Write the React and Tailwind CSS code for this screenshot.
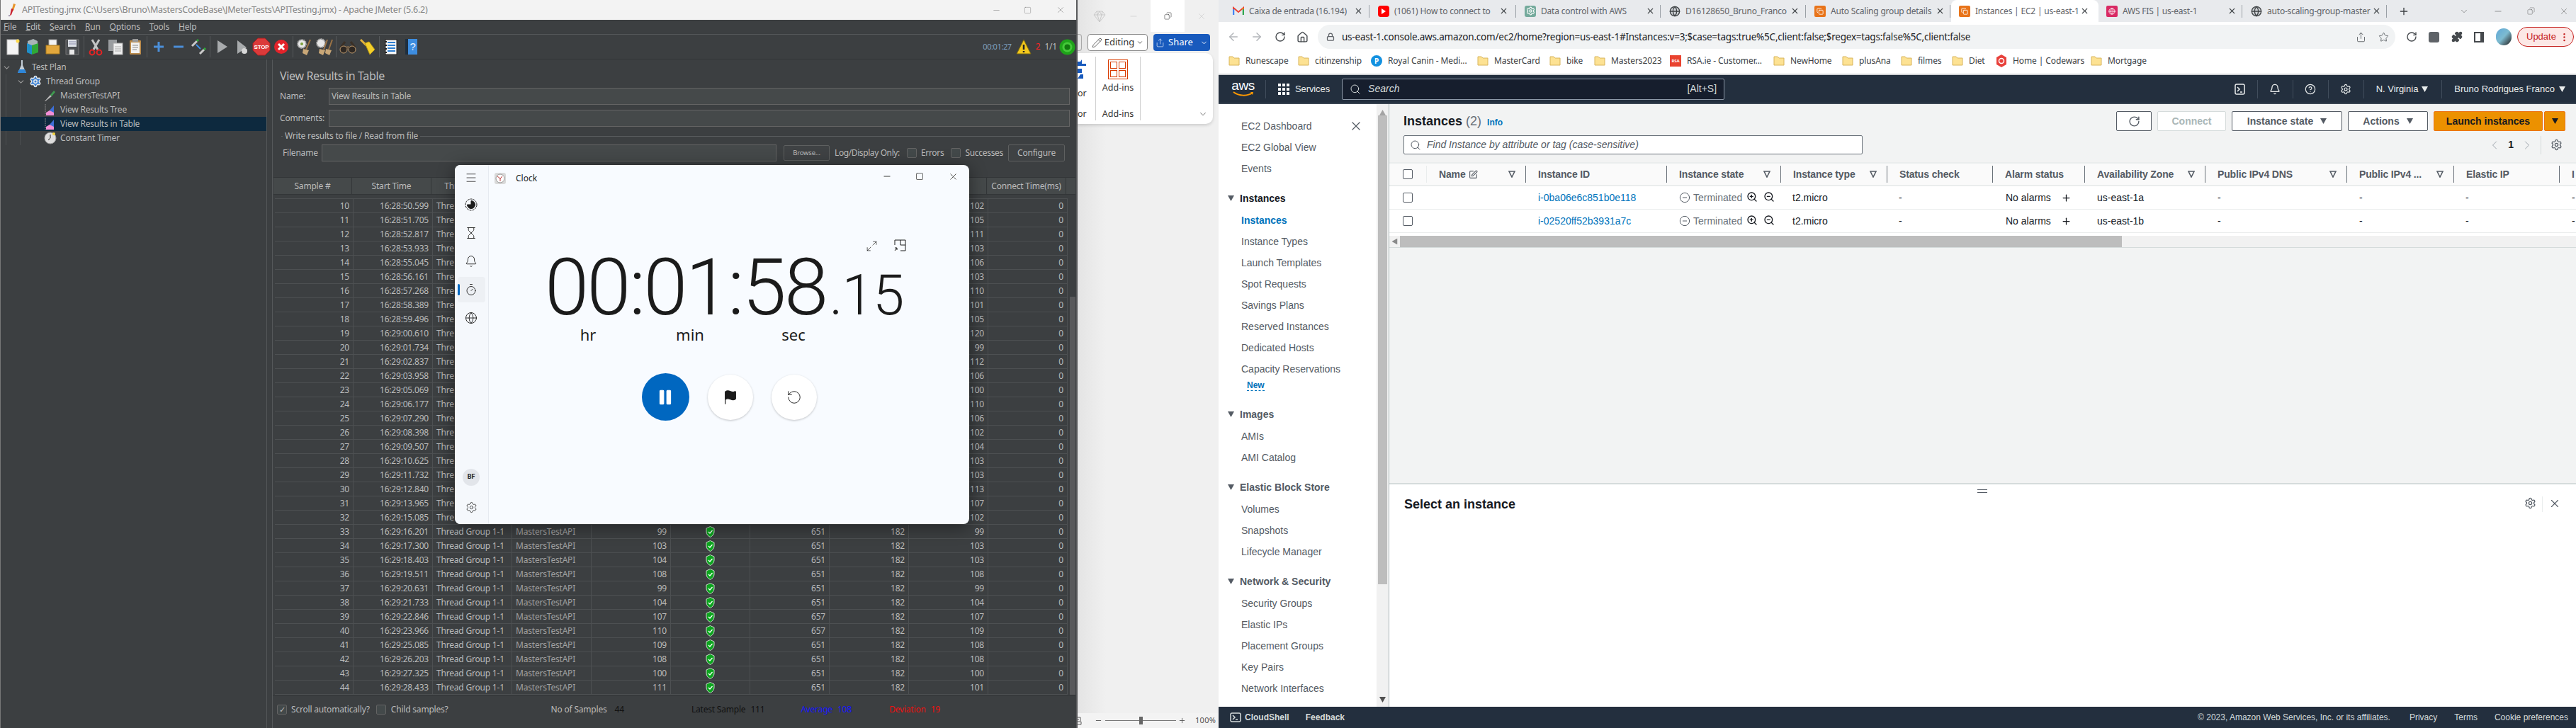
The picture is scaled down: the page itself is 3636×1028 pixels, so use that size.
import {
  ArrowLeft, ArrowRight, Bell, ChevronDown, ChevronLeft, ChevronRight, CircleHelp, CircleMinus, Flag, Globe, Hourglass,
  Lock, Maximize2, Menu, Minus, Pause, Pencil, Plus, RotateCcw, RotateCw, Search, Settings, Share, Square, Star,
  Timer, X, ZoomIn, ZoomOut, Puzzle, Home, EllipsisVertical, Copy, SquarePen,
} from 'lucide-react'

// JMeter data
const times = [
  '16:28:50.599', '16:28:51.705', '16:28:52.817', '16:28:53.933', '16:28:55.045', '16:28:56.161', '16:28:57.268',
  '16:28:58.389', '16:28:59.496', '16:29:00.610', '16:29:01.734', '16:29:02.837', '16:29:03.958', '16:29:05.069',
  '16:29:06.177', '16:29:07.290', '16:29:08.398', '16:29:09.507', '16:29:10.625', '16:29:11.732', '16:29:12.840',
  '16:29:13.965', '16:29:15.085', '16:29:16.201', '16:29:17.300', '16:29:18.403', '16:29:19.511', '16:29:20.631',
  '16:29:21.733', '16:29:22.846', '16:29:23.966', '16:29:25.085', '16:29:26.203', '16:29:27.325', '16:29:28.433',
]
const latency = [102, 105, 111, 103, 106, 103, 110, 101, 105, 120, 99, 112, 106, 100, 110, 106, 102, 104, 103, 103, 113, 107, 102, 99, 103, 103, 108, 99, 104, 107, 109, 108, 108, 100, 101]
const sampleTime = { 33: 99, 34: 103, 35: 104, 36: 108, 37: 99, 38: 104, 39: 107, 40: 110, 41: 109, 42: 108, 43: 100, 44: 111 }
// the Clock window covers the middle columns of these rows and headers
const headers = ['Sample #', 'Start Time', 'Thread Name', '', '', '', '', '', '', 'Connect Time(ms)']

function JIcon({ name }) {
  const svg = (c) => <svg width="26" height="26" viewBox="0 0 26 26">{c}</svg>
  switch (name) {
    case 'new': return svg(<><rect x="5" y="3" width="16" height="21" fill="#f4f4f4" stroke="#bbb" /><circle cx="20" cy="5" r="2.5" fill="#ffd84a" /></>)
    case 'tpl': return svg(<><path d="M6 5l8-3 6 3v7H6z" fill="#a9b4b8" /><path d="M5 8l7 3v13l-7-3z" fill="#1f8fc9" /><path d="M12 11l9-3v13l-9 3z" fill="#2fa838" /></>)
    case 'open': return svg(<><rect x="8" y="3" width="11" height="12" fill="#f3f3f3" stroke="#999" /><path d="M4 11h19v12H4z" fill="#e2a73c" stroke="#a97a1f" /></>)
    case 'save': return svg(<><path d="M4 3h18v21H4z" fill="#4c4f52" stroke="#777" /><rect x="7" y="3" width="12" height="10" fill="#dfe3e8" /><rect x="9" y="17" width="7" height="7" fill="#e9e9e9" /><path d="M8 6h10M8 9h10" stroke="#88a" /></>)
    case 'cut': return svg(<><path d="M8 3l8 14M18 3l-8 14" stroke="#c4c4c4" strokeWidth="3" /><circle cx="8" cy="21" r="3.4" fill="none" stroke="#e32424" strokeWidth="2" /><circle cx="18" cy="21" r="3.4" fill="none" stroke="#e32424" strokeWidth="2" /></>)
    case 'copy': return svg(<><rect x="3" y="3" width="12" height="16" fill="#9a9da0" /><rect x="10" y="8" width="13" height="16" fill="#eee" stroke="#aaa" /><path d="M12 13h9M12 16h9M12 19h9" stroke="#aaa" /></>)
    case 'paste': return svg(<><rect x="5" y="4" width="16" height="20" fill="#b98a4c" rx="1" /><rect x="7" y="7" width="12" height="15" fill="#f2f2f2" /><rect x="9" y="2" width="8" height="4" fill="#999" /><path d="M9 11h8M9 14h8M9 17h6" stroke="#888" /></>)
    case 'plus': return svg(<path d="M13 6v14M6 13h14" stroke="#4b8fd9" strokeWidth="3" />)
    case 'minus': return svg(<path d="M6 13h14" stroke="#4b8fd9" strokeWidth="3" />)
    case 'toggle': return svg(<><path d="M4 12l7-7" stroke="#c9c9c9" strokeWidth="3" /><path d="M11 5l2-2" stroke="#2fa838" strokeWidth="3" /><path d="M15 23l6-6" stroke="#c9c9c9" strokeWidth="3" /><path d="M21 17l2-2" stroke="#2fa838" strokeWidth="3" /><path d="M10 10l6 6" stroke="#3d8fe8" strokeWidth="2" /></>)
    case 'start': return svg(<path d="M7 4l14 9-14 9z" fill="#a8abad" />)
    case 'startx': return svg(<><path d="M7 4l13 10-13 9z" fill="#a8abad" /><circle cx="17" cy="19" r="4" fill="#d7d7d7" /></>)
    case 'stop': return svg(<><path d="M8 1h10l7 7v10l-7 7H8l-7-7V8z" fill="#db3a3a" stroke="#a82020" /><text x="13" y="16" textAnchor="middle" fontSize="8" fontWeight="700" fill="#fff" fontFamily="Liberation Sans">STOP</text></>)
    case 'shut': return svg(<><circle cx="13" cy="13" r="10" fill="#e2232a" /><path d="M9 9l8 8M17 9l-8 8" stroke="#fff" strokeWidth="3" /></>)
    case 'clear': return svg(<><circle cx="9" cy="9" r="6" fill="#e8e8e8" stroke="#999" strokeDasharray="2 1" strokeWidth="2" /><circle cx="9" cy="9" r="2" fill="#7aa03c" /><path d="M21 3l-6 14" stroke="#9a7346" strokeWidth="2" /><path d="M11 16l8 2-3 7-6-3z" fill="#c9a777" /></>)
    case 'clearall': return svg(<><circle cx="8" cy="8" r="6" fill="#e8e8e8" stroke="#999" strokeDasharray="2 1" strokeWidth="2" /><path d="M17 3l-5 14M24 3l-5 14" stroke="#9a7346" strokeWidth="2" /><path d="M6 16l8 2-3 7-6-3zM15 16l8 2-3 7-6-3z" fill="#c9a777" /></>)
    case 'find': return svg(<><path d="M9 6l-6 8M17 6l6 8" stroke="#3a3027" strokeWidth="3" /><circle cx="7" cy="17" r="5" fill="#2e2823" stroke="#c09a6d" /><circle cx="19" cy="17" r="5" fill="#2e2823" stroke="#c09a6d" /><rect x="11" y="12" width="4" height="4" fill="#6d5a44" /></>)
    case 'broom': return svg(<><path d="M3 3l8 8" stroke="#e4b43c" strokeWidth="3" /><path d="M9 8l6-2 8 11-7 7z" fill="#f3cf2b" stroke="#b89813" /></>)
    case 'func': return svg(<><rect x="5" y="3" width="16" height="21" fill="#f6f6f6" stroke="#222" /><path d="M8 7h11M8 11h11M8 15h11M8 19h11" stroke="#2f7fd1" strokeWidth="2" /><path d="M4 6h3M4 11h3M4 16h3M4 21h3" stroke="#222" strokeWidth="2" /></>)
    case 'help': return svg(<><rect x="5" y="2" width="5" height="22" fill="#1f2f3f" /><rect x="9" y="2" width="13" height="22" fill="#3d8de0" /><text x="15.5" y="18" textAnchor="middle" fontSize="15" fill="#e8f2ff" fontFamily="Liberation Sans">?</text></>)
    default: return null
  }
}

function Sep() {
  return <div className="w-[5px] h-[30px] flex justify-center"><div className="w-px h-full bg-[#55585a]" /></div>
}

function Tool({ name }) {
  return <div className="w-[28px] h-[34px] flex items-center justify-center"><JIcon name={name} /></div>
}

function Shield() {
  return (
    <svg width="13" height="16" viewBox="0 0 13 16">
      <path d="M6.5 0.5L12 3v5c0 3.5-2.5 6-5.5 7.5C3.5 14 1 11.5 1 8V3z" fill="#0ca51e" stroke="#c9d8c9" />
      <path d="M4 8l2 2 3.5-4" fill="none" stroke="#fff" strokeWidth="1.3" />
    </svg>
  )
}

function TreeGraph() {
  return (
    <svg width="16" height="18" viewBox="0 0 16 18">
      <path d="M1 1v16" stroke="#888" strokeDasharray="2 1" />
      <path d="M3 16l4-6 6-7v13z" fill="#3d6fd9" />
      <path d="M2 17v-4l5-3 6 3v4z" fill="#f28ed6" />
    </svg>
  )
}

function Num({ children }) {
  return <div className="border-r border-[#4d5052] text-right pr-[5px] leading-[19px]">{children}</div>
}

function ResultRow({ n, i }) {
  const covered = n < 33
  return (
    <div className="h-[20px] grid grid-cols-[111px_repeat(9,112px)] border-b border-[#4d5052]">
      <Num>{n}</Num>
      <Num>{times[i]}</Num>
      <div className="border-r border-[#4d5052] pl-[5px] leading-[19px] whitespace-nowrap overflow-hidden">{covered ? 'Thre' : 'Thread Group 1-1'}</div>
      <div className="border-r border-[#4d5052] pl-[5px] leading-[19px] text-[#a0a0a0]">{covered ? '' : 'MastersTestAPI'}</div>
      <Num>{covered ? '' : sampleTime[n]}</Num>
      <div className="border-r border-[#4d5052] flex items-center justify-center">{!covered && <Shield />}</div>
      <Num>{covered ? '' : n === 39 || n === 40 ? 657 : 651}</Num>
      <Num>{covered ? '' : 182}</Num>
      <Num>{latency[i]}</Num>
      <Num>0</Num>
    </div>
  )
}

function JMeter() {
  return (
    <div className="w-[1521px] shrink-0 h-full flex flex-col bg-[#3c3f41] border-l border-[#777] border-r-2 border-r-[#58595b] text-[#bbbbbb] font-['Noto_Sans',sans-serif] text-[12px] tracking-[-0.2px]">
      <div className="h-[28px] bg-[#f3f3f3] flex items-center text-[#858585] text-[12.5px]">
        <svg className="ml-[9px]" width="14" height="20" viewBox="0 0 14 20"><path d="M9 1l3 1-3 9-3 1z" fill="#e8942a" /><path d="M6 8l3 1-3 8-2 1z" fill="#c8202f" /><path d="M3 17l1 2-2 0z" fill="#43285f" /></svg>
        <span className="ml-[7px] tracking-[-0.25px]">APITesting.jmx (C:\Users\Bruno\MastersCodeBase\JMeterTests\APITesting.jmx) - Apache JMeter (5.6.2)</span>
        <div className="ml-auto flex items-center">
          <Minus size={13} strokeWidth={1} className="mr-[32px] text-[#777]" />
          <Square size={11} strokeWidth={1} className="mr-[34px] text-[#777]" />
          <X size={14} strokeWidth={1} className="mr-[15px] text-[#777]" />
        </div>
      </div>
      <div className="h-[21px] flex items-center border-b border-[#55585a] pl-[4px] gap-[13px]">
        {['File', 'Edit', 'Search', 'Run', 'Options', 'Tools', 'Help'].map((m) => (
          <span key={m}><span className="underline">{m[0]}</span>{m.slice(1)}</span>
        ))}
      </div>
      <div className="h-[35px] flex items-center pl-[3px] border-b border-[#333638]">
        <Tool name="new" /><Tool name="tpl" /><Tool name="open" /><Tool name="save" /><Sep />
        <Tool name="cut" /><Tool name="copy" /><Tool name="paste" /><Sep />
        <Tool name="plus" /><Tool name="minus" /><Tool name="toggle" /><Sep />
        <Tool name="start" /><Tool name="startx" /><Tool name="stop" /><Tool name="shut" /><Sep />
        <Tool name="clear" /><Tool name="clearall" /><Sep />
        <Tool name="find" /><Tool name="broom" /><Sep />
        <Tool name="func" /><Tool name="help" />
        <div className="ml-auto flex items-center mr-[1px]">
          <span className="text-[#7f9fbf] text-[11px] tracking-[-0.4px]">00:01:27</span>
          <svg className="ml-[5px]" width="24" height="24" viewBox="0 0 24 24"><path d="M12 2l10 20H2z" fill="#f4c81c" stroke="#7b6a10" /><path d="M12 9v7M12 18v2" stroke="#222" strokeWidth="2.5" /></svg>
          <span className="ml-[5px] text-[#ff2424] text-[12px]">2</span>
          <span className="ml-[6px] text-[12px]">1/1</span>
          <svg className="ml-[3px]" width="23" height="23" viewBox="0 0 23 23"><circle cx="11.5" cy="11.5" r="11" fill="#1fa31a" /><circle cx="11.5" cy="11.5" r="7" fill="#45c93a" /><circle cx="11.5" cy="11.5" r="4" fill="#12780f" /></svg>
        </div>
      </div>
      <div className="flex-1 flex min-h-0">
        {/* tree */}
        <div className="w-[376px] shrink-0 relative pt-[1px] border-r border-[#55585a]">
          <div className="absolute left-[7px] top-[21px] h-[100px] w-px bg-[#4b4e50]" />
          <div className="absolute left-[27px] top-[41px] h-[80px] w-px bg-[#4b4e50]" />
          <div className="h-[20px] flex items-center">
            <ChevronDown size={13} className="ml-[2px] text-[#9a9a9a]" />
            <svg className="ml-[7px]" width="16" height="20" viewBox="0 0 16 20"><path d="M7 0h2v7l5 11H2L7 7z" fill="#c5cfd8" /><path d="M4 13h8l2 5H2z" fill="#2d86d9" /></svg>
            <span className="ml-[6px]">Test Plan</span>
          </div>
          <div className="h-[20px] flex items-center">
            <ChevronDown size={13} className="ml-[22px] text-[#9a9a9a]" />
            <Settings size={18} className="ml-[5px] text-[#e4e7ea]" fill="#3d83d6" />
            <span className="ml-[6px]">Thread Group</span>
          </div>
          <div className="h-[20px] flex items-center pl-[61px]">
            <svg width="18" height="18" viewBox="0 0 18 18"><path d="M1 17l8-9 2 2-9 7z" fill="#bbb" /><path d="M9 8l5-6 2 2-5 6z" fill="#3f9a50" /></svg>
            <span className="ml-[5px]">MastersTestAPI</span>
          </div>
          <div className="h-[20px] flex items-center pl-[62px]"><TreeGraph /><span className="ml-[6px]">View Results Tree</span></div>
          <div className="h-[20px] flex items-center pl-[62px] bg-[#0d293e] relative"><TreeGraph /><span className="ml-[6px]">View Results in Table</span></div>
          <div className="h-[20px] flex items-center pl-[61px]">
            <svg width="18" height="18" viewBox="0 0 18 18"><circle cx="9" cy="9" r="8" fill="#ddd" stroke="#999" /><path d="M9 4v5l-3 3" stroke="#222" fill="none" /><circle cx="14" cy="3" r="2" fill="#f2d33a" /></svg>
            <span className="ml-[5px]">Constant Timer</span>
          </div>
        </div>
        <div className="w-[7px] shrink-0" />
        {/* results panel */}
        <div className="w-[1134px] shrink-0 flex flex-col border-l border-[#55585a]">
          <div className="h-[40px] pl-[10px] pt-[11px] text-[16px] leading-[24px] tracking-[-0.35px]">View Results in Table</div>
          <div className="h-[24px] flex items-center pl-[10px]">
            <span className="w-[69px]">Name:</span>
            <div className="w-[1046px] h-full border border-[#646464] bg-[#45494a] flex items-center pl-[3px]">View Results in Table</div>
          </div>
          <div className="h-[24px] flex items-center pl-[10px] mt-[7px]">
            <span className="w-[69px]">Comments:</span>
            <div className="w-[1046px] h-full border border-[#646464] bg-[#45494a]" />
          </div>
          <div className="relative h-[25px] flex items-center ml-[12px]">
            <div className="absolute left-0 right-[8px] top-[13px] h-px bg-[#5a5d5f]" />
            <span className="relative bg-[#3c3f41] ml-[2px] px-[3px]">Write results to file / Read from file</span>
          </div>
          <div className="h-[24px] flex items-center pl-[14px]">
            <span className="w-[55px]">Filename</span>
            <div className="w-[642px] h-full border border-[#646464] bg-[#45494a]" />
            <div className="ml-[10px] w-[65px] h-[22px] border border-[#5e6060] rounded-[2px] bg-[#3f4244] flex items-center justify-center text-[9.5px]">Browse...</div>
            <span className="ml-[7px] tracking-[-0.4px]">Log/Display Only:</span>
            <div className="ml-[10px] w-[14px] h-[14px] border border-[#646464] rounded-[2px] bg-[#43494a]" />
            <span className="ml-[6px] tracking-[-0.3px]">Errors</span>
            <div className="ml-[10px] w-[14px] h-[14px] border border-[#646464] rounded-[2px] bg-[#43494a]" />
            <span className="ml-[6px] tracking-[-0.3px]">Successes</span>
            <div className="ml-[7px] w-[80px] h-[24px] border border-[#5e6060] rounded-[2px] bg-[#3f4244] flex items-center justify-center">Configure</div>
          </div>
          {/* table */}
          <div className="mt-[22px] ml-[1px] h-[25px] grid grid-cols-[111px_repeat(9,112px)] bg-[#45494a] border-y border-[#333638]">
            {headers.map((h, i) => <div key={i} className="border-r border-[#333638] flex items-center justify-center whitespace-nowrap overflow-hidden">{h}</div>)}
          </div>
          <div className="flex mt-[5px] ml-[3px]">
            <div className="w-[1119px] border-t border-[#4d5052]">
              {times.map((t, i) => <ResultRow key={t} n={i + 10} i={i} />)}
            </div>
            <div className="ml-[3px] w-[8px] mt-[139px] h-[562px] bg-[#58595b]" />
          </div>
          <div className="h-px mt-[1px] bg-[#333638]" />
          <div className="flex-1 flex items-center pb-[8px] pl-[6px]">
            <div className="w-[14px] h-[14px] border border-[#646464] rounded-[2px] bg-[#43494a] flex items-center justify-center text-[11px] leading-none">✓</div>
            <span className="ml-[6px]">Scroll automatically?</span>
            <div className="ml-[9px] w-[14px] h-[14px] border border-[#646464] rounded-[2px] bg-[#43494a]" />
            <span className="ml-[7px]">Child samples?</span>
            <span className="ml-[145px]">No of Samples</span><span className="ml-[11px] text-[#111]">44</span>
            <span className="ml-[95px] text-[#111]">Latest Sample</span><span className="ml-[7px] text-[#111]">111</span>
            <span className="ml-[51px] text-[#1414ff]">Average</span><span className="ml-[7px] text-[#1414ff]">108</span>
            <span className="ml-[53px] text-[#f01010]">Deviation</span><span className="ml-[7px] text-[#f01010]">19</span>
          </div>
        </div>
      </div>
    </div>
  )
}

function Word() {
  return (
    <div className="w-[199px] shrink-0 h-full flex flex-col bg-linear-to-r from-[#e4e4e4] to-[#f0f0f0] to-[20%] font-['Noto_Sans',sans-serif] text-[12px] text-[#333]">
      <div className="h-[45px] flex justify-end">
        <div className="w-[48px] flex items-center justify-center text-[#c9c9c9]">
          <svg width="18" height="18" viewBox="0 0 18 18" fill="none" stroke="currentColor"><path d="M5 2h8l4 5-8 10L1 7zM1 7h16M6 7l3 10 3-10M5 2l1 5 3-5 3 5 1-5" /></svg>
        </div>
        <div className="w-[48px] flex items-center justify-center text-[#c4c4c4]"><Minus size={14} strokeWidth={1} /></div>
        <div className="w-[48px] bg-white flex items-center justify-center"><Copy size={11} strokeWidth={1.2} className="-scale-x-100" /></div>
        <div className="w-[48px] flex items-center justify-center text-[#c4c4c4]"><X size={14} strokeWidth={1} /></div>
      </div>
      <div className="h-[24px] mt-[3px] flex pr-[12px]">
        <div className="w-[6px] h-full border border-l-0 border-[#aaa] rounded-r" />
        <div className="ml-[8px] w-[85px] h-full border border-[#8a8a8a] rounded-[4px] bg-white flex items-center justify-center gap-[3px] text-[13px]">
          <Pencil size={15} strokeWidth={1.2} /> Editing <ChevronDown size={10} />
        </div>
        <div className="ml-[8px] w-[80px] h-full rounded-[4px] bg-[#185abd] text-white flex items-center justify-center gap-[5px] text-[13px]">
          <Share size={13} strokeWidth={1.2} /> Share <ChevronDown size={11} className="ml-[5px]" />
        </div>
      </div>
      <div className="mt-[3px] mr-[8px] h-[100px] bg-white rounded-r-[10px] shadow-[0_2px_4px_rgba(0,0,0,0.15)] flex py-[5px] relative">
        <div className="w-[26px] border-r border-[#d0d0d0] flex flex-col text-[12.5px]">
          <svg width="12" height="30" viewBox="0 0 12 30" className="mt-[3px]"><path d="M0 4h4l2-3v6H12V10H0zM0 14h6v6H0zM4 22h4v6H0z" fill="#185abd" /></svg>
          <span className="h-[20px] mt-[4px] pt-[6px]">or</span>
          <span className="mt-auto leading-[18px]">or</span>
        </div>
        <div className="w-[63px] border-r border-[#d0d0d0] flex flex-col items-center text-[12.5px]">
          <svg width="28" height="28" viewBox="0 0 28 28" className="mt-[4px]" fill="none" stroke="#d83b01"><rect x="0.5" y="0.5" width="27" height="27" /><rect x="3.5" y="3.5" width="9" height="9" /><rect x="15.5" y="3.5" width="9" height="9" /><rect x="3.5" y="15.5" width="9" height="9" /><rect x="15.5" y="15.5" width="9" height="9" /></svg>
          <span className="mt-[3px] leading-[18px]">Add-ins</span>
          <span className="mt-auto leading-[18px]">Add-ins</span>
        </div>
        <ChevronDown size={14} strokeWidth={1.2} className="absolute right-[7px] bottom-[7px]" />
      </div>
      <div className="mt-auto h-[21px] flex items-center bg-[#f3f3f3] text-[11px]">
        <svg width="6" height="12" viewBox="0 0 6 12" fill="none" stroke="#555"><path d="M0 1h4v5M0 4h2M0 7h5v4H0" /></svg>
        <Minus size={11} className="ml-[18px] text-[#555]" />
        <div className="ml-[4px] w-[100px] h-px bg-[#777] relative flex justify-center items-center">
          <div className="w-[5px] h-[11px] bg-[#666]" />
        </div>
        <Plus size={11} className="ml-[3px] text-[#555]" />
        <span className="ml-[13px] text-[#555] tracking-[0.3px]">100%</span>
      </div>
    </div>
  )
}

function TabIcon({ kind }) {
  if (kind === 'gmail') return <svg width="16" height="13" viewBox="0 0 16 13"><path d="M1 12V2l7 6 7-6v10" fill="none" stroke="#ea4335" strokeWidth="2" /><path d="M1 12V4" stroke="#4285f4" strokeWidth="2.5" /><path d="M15 12V4" stroke="#34a853" strokeWidth="2.5" /><path d="M13 3l2-1v3z" fill="#fbbc04" /></svg>
  if (kind === 'yt') return <div className="w-[16px] h-[16px] rounded-[4px] bg-[#f00] flex items-center justify-center"><div className="w-0 h-0 border-y-[4px] border-y-transparent border-l-[6px] border-l-white" /></div>
  if (kind === 'gpt') return <div className="w-[16px] h-[16px] rounded-[3px] bg-[#74aa9c] flex items-center justify-center"><Settings size={13} className="text-white" /></div>
  if (kind === 'globe') return <Globe size={16} className="text-[#3c4043]" fill="#cfd2d6" />
  if (kind === 'aws') return <div className="w-[16px] h-[16px] rounded-[2px] bg-[#e8741a] flex items-center justify-center"><Copy size={10} className="text-white" /></div>
  return <div className="w-[16px] h-[16px] rounded-[2px] bg-[#d92a64] flex items-center justify-center"><Globe size={10} className="text-white" /></div>
}

const tabs = [
  { w: 'w-[205px]', kind: 'gmail', t: 'Caixa de entrada (16.194)' },
  { w: 'w-[207px]', kind: 'yt', t: '(1061) How to connect to' },
  { w: 'w-[204px]', kind: 'gpt', t: 'Data control with AWS' },
  { w: 'w-[205px]', kind: 'globe', t: 'D16128650_Bruno_Franco' },
  { w: 'w-[204px]', kind: 'aws', t: 'Auto Scaling group details' },
  { w: 'w-[208px]', kind: 'aws', t: 'Instances | EC2 | us-east-1', active: true },
  { w: 'w-[204px]', kind: 'fis', t: 'AWS FIS | us-east-1' },
  { w: 'w-[204px]', kind: 'globe', t: 'auto-scaling-group-master' },
]

function Folder() {
  return <svg width="16" height="16" viewBox="0 0 16 16" className="shrink-0"><path d="M1 2h5l2 2h7v10H1z" fill="#fde293" stroke="#d8b45a" /></svg>
}

const bookmarks = [
  { w: 'w-[98px]', t: 'Runescape' },
  { w: 'w-[103px]', t: 'citinzenship' },
  { w: 'w-[150px]', t: 'Royal Canin - Medi...', icon: <div className="w-[16px] h-[16px] rounded-full bg-[#1391e0] text-white text-[10px] font-bold flex items-center justify-center shrink-0">P</div> },
  { w: 'w-[102px]', t: 'MasterCard' },
  { w: 'w-[63px]', t: 'bike' },
  { w: 'w-[107px]', t: 'Masters2023' },
  { w: 'w-[146px]', t: 'RSA.ie - Customer...', icon: <div className="w-[16px] h-[16px] bg-[#e9432f] text-white text-[6px] font-bold flex items-center justify-center shrink-0">RSA</div> },
  { w: 'w-[97px]', t: 'NewHome' },
  { w: 'w-[83px]', t: 'plusAna' },
  { w: 'w-[72px]', t: 'filmes' },
  { w: 'w-[62px]', t: 'Diet' },
  { w: 'w-[134px]', t: 'Home | Codewars', icon: <svg width="16" height="18" viewBox="0 0 16 18" className="shrink-0"><path d="M8 0l7 4v10l-7 4-7-4V4z" fill="#e8413b" /><circle cx="8" cy="9" r="3.5" fill="none" stroke="#fff" strokeWidth="1.5" /></svg> },
  { w: 'w-[90px]', t: 'Mortgage' },
]

function Caret({ className }) {
  return <svg width="9" height="8" viewBox="0 0 9 8" className={className}><path d="M0 0h9L4.5 8z" fill="currentColor" /></svg>
}

function Filter() {
  return <svg width="10" height="10" viewBox="0 0 10 10" className="shrink-0"><path d="M1 1h8L5 9z" fill="none" stroke="#545b64" strokeWidth="1.6" /></svg>
}

function NavSep() {
  return <div className="w-px h-[26px] bg-[#414d5c]" />
}

function NavIcon({ children }) {
  return <div className="w-[49px] flex justify-center text-[#eaeded]">{children}</div>
}

const sideA = ['EC2 Dashboard', 'EC2 Global View', 'Events']
const sideInstances = ['Instance Types', 'Launch Templates', 'Spot Requests', 'Savings Plans', 'Reserved Instances', 'Dedicated Hosts', 'Capacity Reservations']
const sideImages = ['AMIs', 'AMI Catalog']
const sideEbs = ['Volumes', 'Snapshots', 'Lifecycle Manager']
const sideNet = ['Security Groups', 'Elastic IPs', 'Placement Groups', 'Key Pairs', 'Network Interfaces']

function SideItem({ t, blue }) {
  return <div className={`h-[30px] flex items-center pl-[32px] whitespace-nowrap ${blue ? 'text-[#0073bb] font-bold' : 'text-[#545b64]'}`}>{t}</div>
}

function SideHead({ t, className }) {
  return (
    <div className={`h-[30px] flex items-center font-bold text-[#545b64] whitespace-nowrap ${className}`}>
      <Caret className="ml-[13px] mr-[8px] text-[#545b64]" />{t}
    </div>
  )
}

function Sidebar() {
  return (
    <div className="w-[241px] shrink-0 flex border-r border-[#aab7b8] bg-white text-[14px] overflow-hidden">
      <div className="w-[223px] shrink-0 pt-[16px]">
        <div className="relative">
          {sideA.map((t) => <SideItem key={t} t={t} />)}
          <X size={20} strokeWidth={1.5} className="absolute left-[184px] top-[5px] text-[#545b64]" />
        </div>
        <SideHead t="Instances" className="mt-[12px] text-[#16191f]" />
        <div className="mt-[1px]">
          <SideItem t="Instances" blue />
          {sideInstances.map((t) => <SideItem key={t} t={t} />)}
          <div className="h-[16px] pl-[40px] text-[12px] leading-[16px] font-bold text-[#0073bb]"><span className="border-b border-dashed border-[#0073bb]">New</span></div>
        </div>
        <SideHead t="Images" className="mt-[18px]" />
        <div className="mt-[1px]">{sideImages.map((t) => <SideItem key={t} t={t} />)}</div>
        <SideHead t="Elastic Block Store" className="mt-[12px]" />
        <div className="mt-[1px]">{sideEbs.map((t) => <SideItem key={t} t={t} />)}</div>
        <SideHead t="Network & Security" className="mt-[12px]" />
        <div className="mt-[1px]">{sideNet.map((t) => <SideItem key={t} t={t} />)}</div>
      </div>
      <div className="w-[17px] bg-[#f1f1f1] flex flex-col items-center">
        <div className="h-[16px] flex items-end justify-center"><Caret className="rotate-180 text-[#a3a3a3]" /></div>
        <div className="w-[13px] h-[662px] bg-[#bdbdbd]" />
        <div className="mt-auto mb-[6px]"><Caret className="text-[#505050]" /></div>
      </div>
    </div>
  )
}

const colsClass = 'grid grid-cols-[53px_140px_199px_161px_150px_149px_130px_170px_200px_151px_149px_1fr]'

function Head({ t, filter, pencil }) {
  return (
    <div className="h-[24px] self-center border-r border-[#687078] pl-[17px] pr-[14px] flex items-center font-bold text-[#545b64] tracking-[-0.15px] whitespace-nowrap">
      <span>{t}</span>
      {pencil && <SquarePen size={13} className="ml-[4px]" />}
      {filter && <span className="ml-auto"><Filter /></span>}
    </div>
  )
}

function InstanceRow({ id, az }) {
  return (
    <div className={`${colsClass} h-[33px] bg-white border-b border-[#eaeded] items-center text-[#16191f] whitespace-nowrap`}>
      <div className="pl-[19px]"><div className="w-[14px] h-[14px] border border-[#545b64] rounded-[2px]" /></div>
      <div />
      <div className="pl-[17px] text-[#0073bb]">{id}</div>
      <div className="pl-[17px] flex items-center text-[#545b64]">
        <CircleMinus size={16} strokeWidth={1.5} className="mr-[4px]" />
        <span className="text-[#687078]">Terminated</span>
        <ZoomIn size={16} className="ml-[6px] -mt-[2px] text-[#16191f]" />
        <ZoomOut size={16} className="ml-[8px] -mt-[2px] text-[#16191f]" />
      </div>
      <div className="pl-[16px]">t2.micro</div>
      <div className="pl-[16px]">-</div>
      <div className="pl-[18px] flex items-center">No alarms <Plus size={15} className="ml-[14px]" /></div>
      <div className="pl-[17px]">{az}</div>
      <div className="pl-[17px]">-</div>
      <div className="pl-[17px]">-</div>
      <div className="pl-[16px]">-</div>
      <div className="pl-[17px]">-</div>
    </div>
  )
}

function AwsButton({ className, children }) {
  return <div className={`h-[28px] border rounded-[2px] flex items-center justify-center font-bold ${className}`}>{children}</div>
}

function Chrome() {
  return (
    <div className="flex-1 min-w-0 h-full flex flex-col font-['Liberation_Sans',sans-serif] text-[14px] bg-white">
      <div className="h-[31px] bg-[#e8eaed] flex items-center pl-[9px] font-['Noto_Sans',sans-serif] text-[12px] text-[#5f6368] shrink-0">
        {tabs.map((t) => (
          <div key={t.t} className={`${t.w} h-full flex items-center pl-[11px] ${t.active ? 'bg-white rounded-t-[8px]' : ''}`}>
            <TabIcon kind={t.kind} />
            <span className="ml-[7px] w-[146px] overflow-hidden whitespace-nowrap tracking-[-0.2px]">{t.t}</span>
            <X size={13} strokeWidth={2} className="ml-[2px] text-[#45494d]" />
            {!t.active && <div className="ml-auto mr-px w-px h-[18px] bg-[#9aa0a6]" />}
          </div>
        ))}
        <Plus size={16} className="ml-[15px] text-[#3c4043]" />
        <ChevronDown size={14} strokeWidth={1} className="ml-[70px] text-[#555]" />
        <Minus size={14} strokeWidth={1} className="ml-[34px] text-[#555]" />
        <Copy size={11} strokeWidth={1} className="ml-[34px] -scale-x-100 text-[#555]" />
        <X size={14} strokeWidth={1} className="ml-[34px] text-[#555]" />
      </div>
      <div className="h-[42px] flex items-center pl-[12px] shrink-0">
        <ArrowLeft size={18} className="text-[#b4b7bb]" />
        <ArrowRight size={18} className="ml-[15px] text-[#b4b7bb]" />
        <RotateCw size={16} className="ml-[16px] text-[#45494d]" />
        <Home size={17} className="ml-[15px] text-[#45494d]" />
        <div className="ml-[13px] w-[1521px] h-[34px] rounded-full bg-[#f1f3f4] flex items-center pl-[12px] text-[#202124] font-['Noto_Sans',sans-serif] text-[13.5px]">
          <Lock size={12} strokeWidth={2.5} className="text-[#5f6368]" />
          <span className="ml-[10px] tracking-[-0.22px] whitespace-nowrap">us-east-1.console.aws.amazon.com/ec2/home?region=us-east-1#Instances:v=3;$case=tags:true%5C,client:false;$regex=tags:false%5C,client:false</span>
          <Share size={15} strokeWidth={1.5} className="ml-auto text-[#5f6368]" />
          <Star size={15} strokeWidth={1.5} className="ml-[17px] mr-[9px] text-[#5f6368]" />
        </div>
        <RotateCw size={16} className="ml-[15px] text-[#45494d]" />
        <div className="ml-[16px] w-[15px] h-[15px] rounded-[3px] bg-[#5f6368]" />
        <Puzzle size={16} className="ml-[17px] text-[#45494d]" fill="#45494d" />
        <div className="ml-[16px] w-[14px] h-[15px] border-2 border-[#45494d] border-r-[5px]" />
        <div className="ml-[17px] w-[22px] h-[24px] rounded-full bg-linear-to-br from-[#5fa8d8] via-[#7dbbd0] to-[#222]" />
        <div className="ml-[8px] w-[80px] h-[28px] rounded-full border border-[#c5221f] bg-[#fce8e6] flex items-center pl-[12px] text-[#c5221f] text-[13px]">
          Update <EllipsisVertical size={15} className="ml-[4px]" />
        </div>
      </div>
      <div className="h-[33px] flex items-center pl-[14px] pb-[5px] border-b-2 border-[#cfd1d3] font-['Noto_Sans',sans-serif] text-[12px] text-[#3c4043] tracking-[-0.1px] shrink-0">
        {bookmarks.map((b) => (
          <div key={b.t} className={`${b.w} flex items-center gap-[8px] whitespace-nowrap`}>{b.icon || <Folder />}<span>{b.t}</span></div>
        ))}
      </div>
      {/* aws top nav */}
      <div className="h-[41px] bg-[#232f3e] flex items-center border-b-2 border-[#3a4552] text-[#eaeded] text-[13px] shrink-0">
        <div className="w-[66px] flex flex-col items-center pl-[3px] leading-none">
          <span className="text-white text-[19px] -mt-[4px] tracking-[-0.5px]">aws</span>
          <svg width="32" height="8" viewBox="0 0 32 8" className="-mt-[1px]"><path d="M2 1c8 6 20 6 27 1" fill="none" stroke="#f90" strokeWidth="2" /><path d="M26 1h4l-1 4z" fill="#f90" /></svg>
        </div>
        <NavSep />
        <div className="ml-[17px] grid grid-cols-3 gap-[2px]">
          {[0, 1, 2, 3, 4, 5, 6, 7, 8].map((i) => <div key={i} className="w-[4px] h-[4px] bg-white" />)}
        </div>
        <span className="ml-[8px] tracking-[-0.1px]">Services</span>
        <div className="ml-[17px] w-[540px] h-[30px] bg-[#161e2d] border border-[#8d99a8] rounded-[2px] flex items-center pl-[10px] pr-[10px] text-[#d5dbdb] text-[14px]">
          <Search size={16} strokeWidth={1.5} />
          <span className="ml-[10px] italic">Search</span>
          <span className="ml-auto">[Alt+S]</span>
        </div>
        <div className="ml-auto flex items-center">
          <NavIcon><svg width="15" height="16" viewBox="0 0 15 16" fill="none" stroke="currentColor" strokeWidth="1.5"><rect x="1" y="1" width="13" height="14" rx="2" /><path d="M4 5l3 3-3 3M8 12h3" /></svg></NavIcon>
          <NavSep />
          <NavIcon><Bell size={16} strokeWidth={2} /></NavIcon>
          <NavSep />
          <NavIcon><CircleHelp size={16} strokeWidth={1.8} /></NavIcon>
          <NavSep />
          <NavIcon><Settings size={16} strokeWidth={1.8} /></NavIcon>
          <NavSep />
          <span className="ml-[17px]">N. Virginia</span>
          <Caret className="ml-[5px] mr-[19px]" />
          <NavSep />
          <span className="ml-[17px]">Bruno Rodrigues Franco</span>
          <Caret className="ml-[6px] mr-[15px]" />
        </div>
      </div>
      <div className="flex-1 flex min-h-0">
        <Sidebar />
        <div className="flex-1 min-w-0 flex flex-col bg-[#f2f3f3] relative">
          <div className="h-[38px] mt-[10px] flex px-[20px] pr-[15px] items-start">
            <div className="flex items-baseline leading-[28px]">
              <span className="text-[18px] font-bold text-[#16191f]">Instances</span>
              <span className="ml-[5px] text-[18px] text-[#687078]">(2)</span>
              <span className="ml-[8px] text-[12px] font-bold text-[#0073bb]">Info</span>
            </div>
            <div className="ml-auto flex gap-[8px]">
              <AwsButton className="w-[50px] border-[#545b64] bg-white text-[#545b64]"><RotateCw size={17} /></AwsButton>
              <AwsButton className="w-[97px] border-[#d5dbdb] bg-white text-[#aab7b8]">Connect</AwsButton>
              <AwsButton className="w-[156px] border-[#545b64] bg-white text-[#545b64] gap-[10px]">Instance state <Caret /></AwsButton>
              <AwsButton className="w-[113px] border-[#545b64] bg-white text-[#545b64] gap-[10px]">Actions <Caret /></AwsButton>
              <div className="flex gap-[2px]">
                <AwsButton className="w-[154px] border-[#ec7211] bg-[#ec9100] text-[#16191f]">Launch instances</AwsButton>
                <AwsButton className="w-[30px] border-[#ec7211] bg-[#ec9100] text-[#16191f]"><Caret /></AwsButton>
              </div>
            </div>
          </div>
          <div className="h-[27px] -mt-[4px] flex items-center px-[20px] pr-[15px]">
            <div className="w-[648px] h-full bg-white border border-[#687078] rounded-[2px] flex items-center pl-[8px] italic text-[#545b64]">
              <Search size={16} strokeWidth={1.5} className="mr-[8px]" />Find Instance by attribute or tag (case-sensitive)
            </div>
            <div className="ml-auto flex items-center text-[#545b64]">
              <ChevronLeft size={20} strokeWidth={1} className="text-[#8a939c]" />
              <span className="mx-[9px] text-[14px] font-bold text-[#16191f]">1</span>
              <ChevronRight size={20} strokeWidth={1} className="text-[#8a939c]" />
              <div className="ml-[9px] w-px h-[26px] bg-[#d5dbdb]" />
              <Settings size={17} strokeWidth={1.8} className="ml-[13px] mr-[4px]" />
            </div>
          </div>
          <div className={`${colsClass} mt-[11px] h-[34px] bg-[#fafafa] border-y-2 border-[#eaeded]`}>
            <div className="self-center h-[24px] border-r border-[#eaeded] pl-[19px] flex items-center"><div className="w-[14px] h-[14px] bg-white border border-[#545b64] rounded-[2px]" /></div>
            <Head t="Name" pencil filter />
            <Head t="Instance ID" />
            <Head t="Instance state" filter />
            <Head t="Instance type" filter />
            <Head t="Status check" />
            <Head t="Alarm status" />
            <Head t="Availability Zone" filter />
            <Head t="Public IPv4 DNS" filter />
            <Head t="Public IPv4 ..." filter />
            <Head t="Elastic IP" />
            <div className="self-center pl-[17px] font-bold text-[#545b64]">I</div>
          </div>
          <InstanceRow id="i-0ba06e6c851b0e118" az="us-east-1a" />
          <InstanceRow id="i-02520ff52b3931a7c" az="us-east-1b" />
          <div className="h-[4px] bg-white" />
          <div className="h-[17px] bg-[#f1f1f1] border-b border-[#d5dbdb] flex items-center">
            <Caret className="ml-[3px] rotate-90 text-[#8a8a8a]" />
            <div className="ml-[3px] w-[1019px] h-full bg-[#bdbdbd]" />
          </div>
          <div className="flex-1" />
          <div className="h-[316px] bg-white border-t-2 border-[#d5dbdb] relative pl-[21px] pt-[16px] shrink-0">
            <span className="text-[18px] font-bold text-[#16191f] leading-[24px]">Select an instance</span>
            <div className="absolute left-[830px] top-[7px] w-[14px] h-[5px] border-y border-[#545b64]" />
            <Settings size={17} strokeWidth={1.8} className="absolute right-[56px] top-[18px] text-[#545b64]" />
            <div className="absolute right-[47px] top-[17px] w-px h-[22px] bg-[#eaeded]" />
            <X size={18} strokeWidth={1.5} className="absolute right-[21px] top-[18px] text-[#545b64]" />
          </div>
        </div>
      </div>
      <div className="h-[30px] bg-[#232f3e] flex items-center text-[#d5dbdb] text-[12px] shrink-0 whitespace-nowrap">
        <svg width="16" height="14" viewBox="0 0 16 14" fill="none" stroke="currentColor" strokeWidth="1.5" className="ml-[16px]"><rect x="1" y="1" width="14" height="12" rx="2" /><path d="M4 4l3 3-3 3M8 10h3" /></svg>
        <span className="ml-[5px] font-bold">CloudShell</span>
        <span className="ml-[23px] font-bold">Feedback</span>
        <span className="ml-auto">© 2023, Amazon Web Services, Inc. or its affiliates.</span>
        <span className="ml-[27px]">Privacy</span>
        <span className="ml-[24px]">Terms</span>
        <span className="ml-[24px] mr-[11px]">Cookie preferences</span>
      </div>
    </div>
  )
}

function ClockNav({ active, children }) {
  return (
    <div className="h-[40px] flex items-center justify-center">
      <div className={`w-[39px] h-[36px] rounded-[4px] relative flex items-center justify-center ${active ? 'bg-[#edf0f4]' : ''}`}>
        {active && <div className="absolute left-0 top-[10px] w-[3px] h-[16px] rounded-full bg-[#0067c0]" />}
        {children}
      </div>
    </div>
  )
}

function Clock() {
  return (
    <div className="absolute left-[642px] top-[233px] w-[726px] h-[507px] rounded-[8px] bg-[#f8fbff] shadow-[0_4px_24px_rgba(0,0,0,0.45)] flex overflow-hidden font-['Roboto',sans-serif] text-[#1b1b1b]">
      <div className="w-[48px] shrink-0 border-r border-[#e6eaf0] bg-[#f5f8fc] flex flex-col pr-[1px]">
        <div className="h-[36px] flex items-center justify-center"><Menu size={18} strokeWidth={1} /></div>
        <ClockNav>
          <svg width="18" height="18" viewBox="0 0 18 18" fill="none" stroke="#1b1b1b"><circle cx="9" cy="9" r="8" strokeDasharray="3 1" /><path d="M9 3.5A5.5 5.5 0 1 1 3.5 9H9z" fill="#1b1b1b" /></svg>
        </ClockNav>
        <ClockNav><Hourglass size={18} strokeWidth={1.2} /></ClockNav>
        <ClockNav><Bell size={18} strokeWidth={1.2} /></ClockNav>
        <ClockNav active><Timer size={18} strokeWidth={1.2} /></ClockNav>
        <ClockNav><Globe size={18} strokeWidth={1.2} /></ClockNav>
        <div className="mt-auto h-[36px] flex items-center justify-center">
          <div className="w-[24px] h-[24px] rounded-full bg-[#e2e5ea] text-[9px] font-bold flex items-center justify-center">BF</div>
        </div>
        <div className="h-[48px] flex items-center justify-center"><Settings size={17} strokeWidth={1.1} /></div>
      </div>
      <div className="flex-1 flex flex-col min-w-0">
        <div className="h-[38px] flex items-center text-[12px]">
          <svg width="16" height="16" viewBox="0 0 16 16" className="ml-[8px]"><rect width="16" height="16" rx="3" fill="#d9d9d9" /><circle cx="8" cy="8" r="6" fill="#fff" stroke="#999" /><path d="M8 8L4 5M8 8l3-3M8 8v4" stroke="#b33" /></svg>
          <span className="ml-[14px] font-['Noto_Sans',sans-serif]">Clock</span>
          <div className="ml-auto flex items-center pb-[6px]">
            <Minus size={14} strokeWidth={1.5} className="mr-[33px]" />
            <Square size={12} strokeWidth={1.3} className="mr-[34px]" />
            <X size={15} strokeWidth={1.2} className="mr-[15px]" />
          </div>
        </div>
        <div className="mt-[67px] h-[18px] flex justify-end items-center pr-[89px] gap-[22px]">
          <Maximize2 size={17} strokeWidth={1} className="-scale-y-100 -rotate-90" />
          <svg width="18" height="18" viewBox="0 0 18 18" fill="none" stroke="#1b1b1b"><path d="M2 1h8v7h7v8h-7M10 1h7v7M2 1v7M5 12l-3 4M2 12h3v3" /></svg>
        </div>
        <div className="-mt-[6px] ml-[79px] flex items-baseline leading-[112px] font-[350] whitespace-nowrap h-[112px]">
          <span className="text-[112px] tracking-[-2.8px]">00:01:58</span>
          <span className="text-[80px] ml-[4px] tracking-[-1px]">.15</span>
        </div>
        <div className="-mt-[4px] ml-[68px] h-[28px] flex text-[22px] leading-[28px] font-['Noto_Sans',sans-serif]">
          <span className="w-[144px] text-center">hr</span>
          <span className="w-[144px] text-center">min</span>
          <span className="w-[148px] text-center">sec</span>
        </div>
        <div className="mt-[41px] flex items-center justify-center gap-[26px]">
          <div className="w-[67px] h-[67px] rounded-full bg-[#0067c0] flex items-center justify-center text-white"><Pause size={26} fill="white" strokeWidth={1} /></div>
          <div className="w-[64px] h-[64px] rounded-full bg-white shadow-[0_1px_3px_rgba(0,0,0,0.22)] flex items-center justify-center"><Flag size={22} fill="#1b1b1b" strokeWidth={1.3} /></div>
          <div className="w-[64px] h-[64px] rounded-full bg-white shadow-[0_1px_3px_rgba(0,0,0,0.22)] flex items-center justify-center"><RotateCcw size={22} strokeWidth={1} /></div>
        </div>
      </div>
    </div>
  )
}

export default function App() {
  return (
    <div className="relative w-[3636px] h-[1028px] flex overflow-hidden">
      <JMeter />
      <Word />
      <Chrome />
      <Clock />
    </div>
  )
}
